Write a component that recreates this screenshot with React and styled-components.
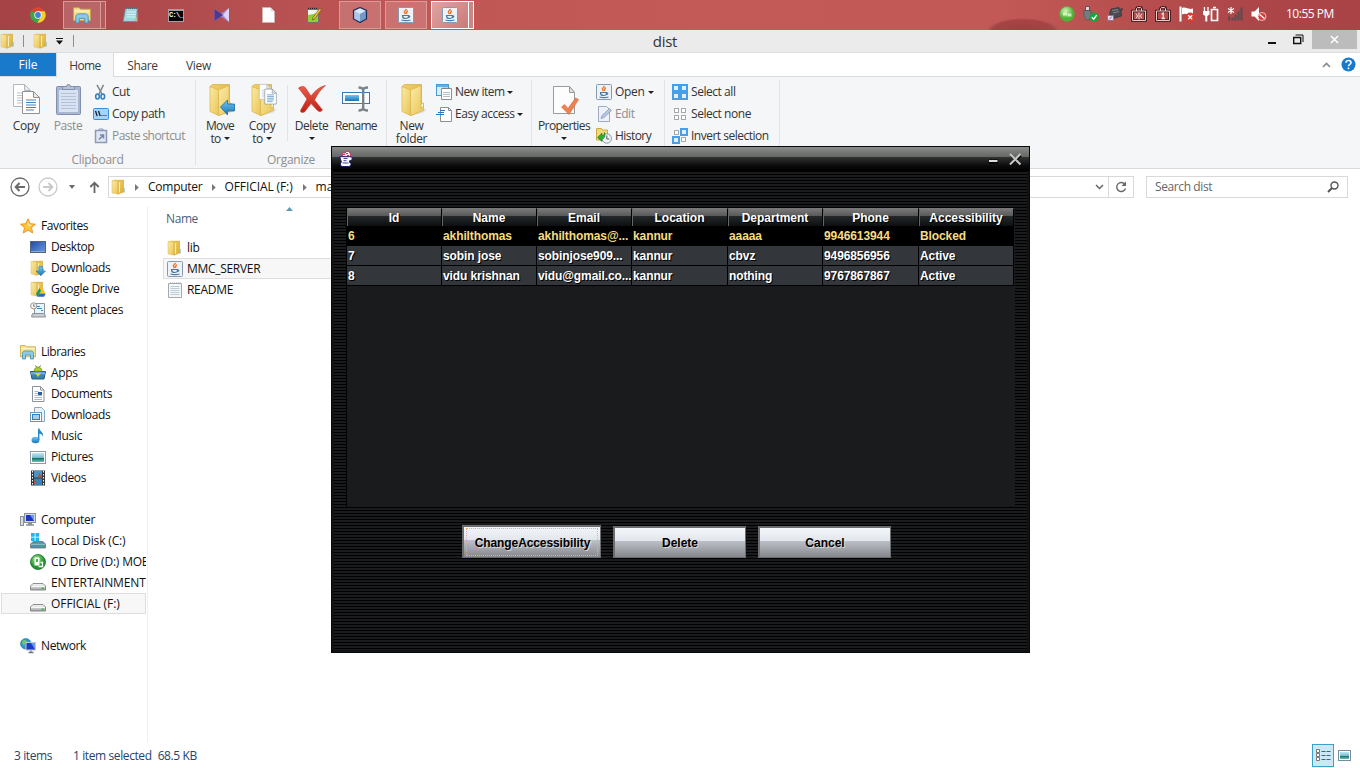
import React from "react";
import styled, { createGlobalStyle, css } from "styled-components";

const Global = createGlobalStyle`
  *, *::before, *::after { box-sizing: border-box; }
  html, body { margin: 0; padding: 0; }
  body { width: 1360px; height: 768px; overflow: hidden; background: #fff; }
  svg { display: block; flex: none; }
`;

const ui = css`
  font-family: "Open Sans", "Noto Sans", sans-serif;
  font-size: 12px;
  line-height: 16px;
  letter-spacing: -0.3px;
  white-space: nowrap;
`;

const Screen = styled.div`
  ${ui}
  position: relative;
  width: 1360px;
  height: 768px;
  overflow: hidden;
  display: flex;
  flex-direction: column;
  color: #111;
  background: #fff;
`;

const Text = styled.span`
  letter-spacing: ${(p) => p.$ls ?? -0.3}px;
`;

/* ---------- taskbar ---------- */
const Taskbar = styled.header`
  height: 30px;
  flex: none;
  display: flex;
  justify-content: space-between;
  background:
    radial-gradient(ellipse 36px 13px at 1023px 31px, #9f3f40 0, #a74345 85%, transparent 100%),
    linear-gradient(90deg, #a44245 0, #b24d4f 200px, #c15755 420px, #c45a57 700px, #c25956 1000px, #ad4649 1250px, #a94346 1360px);
`;
const TaskItems = styled.nav`
  display: flex;
  padding-left: 15px;
`;
const TaskSlot = styled.div`
  width: 46px;
  height: 30px;
  padding: 1px 1px 1px 2px;
`;
const TaskButton = styled.div`
  width: ${(p) => (p.$stack ? 38 : 42)}px;
  height: 28px;
  display: flex;
  align-items: center;
  justify-content: center;
  position: relative;
  ${(p) =>
    p.$open &&
    css`
      border: 1px solid ${p.$active ? "#ffffff" : "#dd9a9a"};
      background: ${p.$active ? "linear-gradient(135deg,#dda5a4,#cb7977)" : "rgba(255,255,255,0.17)"};
    `}
  ${(p) =>
    p.$stack &&
    css`
      &::after {
        content: "";
        position: absolute;
        left: 37px;
        top: -1px;
        width: 5px;
        height: 28px;
        border: 1px solid ${p.$active ? "#ffffff" : "#dd9a9a"};
        border-left: 0;
        background: ${p.$active ? "#cf8583" : "rgba(255,255,255,0.1)"};
      }
    `}
`;
const Tray = styled.div`
  display: flex;
  align-items: center;
  width: 305px;
  padding-bottom: 2px;
`;
const TraySlot = styled.div`
  width: 24px;
  display: flex;
  justify-content: center;
`;
const Clock = styled.time`
  color: #fff;
  margin-left: 15px;
  letter-spacing: -0.5px;
`;

/* ---------- explorer chrome ---------- */
const TitleBar = styled.div`
  height: 23px;
  flex: none;
  display: flex;
  align-items: center;
  background: #ebebeb;
  border-bottom: 1px solid #dcddde;
`;
const QuickBar = styled.div`
  display: flex;
  align-items: center;
  width: 130px;
`;
const Pipe = styled.i`
  width: 1px;
  height: 12px;
  background: #8d8d8d;
  margin: 0 ${(p) => p.$r || 0}px 0 ${(p) => p.$l || 0}px;
`;
const WindowTitle = styled.h1`
  flex: 1;
  margin: 0;
  text-align: center;
  font-weight: 400;
  font-size: 15px;
  line-height: 20px;
  letter-spacing: -0.3px;
  color: #333;
`;
const Caption = styled.div`
  display: flex;
  align-items: flex-start;
  width: 100px;
  height: 22px;
  margin-left: 60px;
`;
const CaptionButton = styled.span`
  width: ${(p) => p.$w}px;
  height: 19px;
  display: flex;
  align-items: center;
  justify-content: center;
  background: ${(p) => (p.$fill ? "#bcbcbc" : "transparent")};
`;

const Tabs = styled.div`
  height: 24px;
  flex: none;
  display: flex;
  border-bottom: 1px solid #dadbdc;
`;
const Tab = styled.div`
  width: ${(p) => p.$w}px;
  height: ${(p) => (p.$on ? 24 : 23)}px;
  padding-top: 5px;
  text-align: center;
  color: #3c3c3c;
  letter-spacing: ${(p) => p.$ls || 0}px;
  ${(p) => p.$file && css`background: #1979ca; color: #fff; padding-top: 4px;`}
  ${(p) =>
    p.$on &&
    css`
      background: #f5f6f7;
      border-right: 1px solid #dadbdc;
      border-left: 1px solid #dadbdc;
    `}
`;
const TabTools = styled.div`
  margin-left: auto;
  display: flex;
  align-items: center;
  gap: 10px;
  padding-right: 4px;
`;

const Ribbon = styled.section`
  height: 92px;
  flex: none;
  display: flex;
  background: #f5f6f7;
  border-bottom: 1px solid #dadbdc;
`;
const Group = styled.div`
  width: ${(p) => p.$w}px;
  height: 85px;
  margin-top: 3px;
  border-right: 1px solid #e2e3e4;
  display: flex;
  flex-direction: column;
  justify-content: space-between;
`;
const GroupBody = styled.div`
  display: flex;
  padding-left: ${(p) => p.$pl || 0}px;
`;
const GroupName = styled.div`
  text-align: center;
  color: #8e8e8e;
  height: 10px;
  line-height: 10px;
  letter-spacing: -0.25px;
`;
const BigButton = styled.div`
  width: ${(p) => p.$w}px;
  display: flex;
  flex-direction: column;
  align-items: center;
  color: ${(p) => (p.$off ? "#8d8d8d" : "#333")};
  line-height: 13px;
  padding-top: 3px;
  letter-spacing: ${(p) => p.$ls ?? -0.1}px;
  svg.big { margin-bottom: 3px; }
`;
const Line = styled.span`
  display: flex;
  align-items: center;
  gap: 3px;
  height: 13px;
`;
const Divider = styled.i`
  width: 1px;
  height: 56px;
  margin: 5px 0 0 4px;
  background: #e2e3e4;
`;
const SmallColumn = styled.div`
  display: flex;
  flex-direction: column;
  padding: 1px 0 0 ${(p) => p.$pl || 0}px;
`;
const SmallButton = styled.div`
  height: 22px;
  display: flex;
  align-items: center;
  gap: 3px;
  color: ${(p) => (p.$off ? "#8d8d8d" : "#333")};
  letter-spacing: ${(p) => p.$ls ?? -0.45}px;
`;
const Caret = styled.i`
  width: 0;
  height: 0;
  margin-left: ${(p) => p.$ml || 0}px;
  border: 3px solid transparent;
  border-top: ${(p) => (p.$c ? 4 : 3)}px solid ${(p) => p.$c || "#222"};
  border-bottom: 0;
`;

const AddressRow = styled.div`
  height: 37px;
  flex: none;
  display: flex;
  align-items: center;
  padding: 0 12px 1px 10px;
`;
const AddressBox = styled.div`
  width: 1026px;
  height: 22px;
  margin-left: 8px;
  border: 1px solid #d9d9d9;
  display: flex;
  align-items: center;
  padding-left: 2px;
`;
const Crumb = styled.span`
  margin-left: ${(p) => p.$l}px;
  letter-spacing: ${(p) => p.$ls ?? 0}px;
`;
const AddressTools = styled.div`
  margin-left: auto;
  height: 20px;
  display: flex;
  align-items: center;
`;
const RefreshBox = styled.div`
  width: 25px;
  height: 20px;
  margin-left: 4px;
  border-left: 1px solid #d9d9d9;
  display: flex;
  align-items: center;
  justify-content: center;
`;
const SearchBox = styled.div`
  width: 202px;
  height: 22px;
  margin-left: 12px;
  border: 1px solid #d9d9d9;
  display: flex;
  align-items: center;
  justify-content: space-between;
  padding: 0 8px;
  color: #666;
`;

const Main = styled.main`
  flex: 1;
  min-height: 0;
  display: flex;
`;
const NavPane = styled.aside`
  width: 148px;
  padding-top: 9px;
  border-right: 1px solid #f0f0f0;
  overflow: hidden;
`;
const NavRow = styled.div`
  width: 146px;
  height: 21px;
  display: flex;
  align-items: center;
  gap: 5px;
  overflow: hidden;
  margin-left: ${(p) => (p.$sel ? 1 : 0)}px;
  ${(p) => p.$sel && css`width: 145px; border: 1px solid #dedede; background: #f7f7f7;`}
  padding-left: ${(p) => (p.$child ? (p.$sel ? 28 : 30) : 20)}px;
`;
const Files = styled.section`
  flex: 1;
  padding-left: 15px;
`;
const FileHeader = styled.div`
  height: 31px;
  padding: 5px 0 0 3px;
  color: #4c607a;
  display: flex;
  gap: 88px;
  align-items: flex-start;
  svg { margin-top: -8px; }
`;
const FileRow = styled.div`
  width: 400px;
  height: 21px;
  display: flex;
  align-items: center;
  gap: 4px;
  padding-left: 3px;
  border: 1px solid ${(p) => (p.$sel ? "#dedede" : "transparent")};
  background: ${(p) => (p.$sel ? "#f7f7f7" : "transparent")};
`;
const Status = styled.footer`
  height: 26px;
  flex: none;
  display: flex;
  align-items: center;
  padding: 1px 8px 0 14px;
  color: #26436f;
`;
const StatusPart = styled.span`
  margin-right: ${(p) => p.$r || 0}px;
  letter-spacing: -0.4px;
`;
const ViewButtons = styled.div`
  margin-left: auto;
  display: flex;
  align-items: center;
  gap: 3px;
`;
const ViewOn = styled.div`
  width: 22px;
  height: 23px;
  border: 1px solid #3ba0cc;
  background: #cbe8f6;
  display: flex;
  align-items: center;
  justify-content: center;
`;

/* ---------- Swing dialog ---------- */
const Dialog = styled.div`
  position: absolute;
  left: 331px;
  top: 146px;
  width: 699px;
  height: 507px;
  display: flex;
  flex-direction: column;
  border: 1px solid #08090a;
  background: #111214;
  font-family: "Liberation Sans", Arial, sans-serif;
  font-size: 12px;
  font-weight: 700;
  letter-spacing: 0;
  color: #fff;
`;
const DialogTitle = styled.div`
  height: 24px;
  flex: none;
  display: flex;
  align-items: center;
  justify-content: space-between;
  padding: 0 7px 0 7px;
  background: linear-gradient(#8a8c8a 0, #656765 10px, #323432 10px, #090a09 19px, #000 24px);
`;
const DialogControls = styled.div`
  display: flex;
  align-items: center;
  gap: 11px;
`;
const DialogBody = styled.div`
  flex: 1;
  margin: 0 2px 2px;
  padding: 37px 12px 0;
  background: repeating-linear-gradient(#000 0 1px, #1a1b1d 1px 3px);
`;
const TablePane = styled.div`
  height: 299px;
  width: 669px;
  background: #1a1b1d;
  border-left: 1px solid #000;
`;
const Grid = styled.div`
  display: grid;
  grid-template-columns: 95px 95px 95px 96px 95px 96px 95px;
  width: 667px;
`;
const HeadCell = styled.div`
  height: 18px;
  line-height: 18px;
  padding-right: 1px;
  text-align: center;
  text-shadow: 1px 1px 0 #000;
  border-right: 1px solid #000;
  border-left: 1px solid #666;
  border-top: 1px solid #777;
  background: linear-gradient(#777877 0, #575958 7px, #26292b 7px, #0d0f10 17px);
`;
const Cell = styled.div`
  height: 20px;
  line-height: 20px;
  padding-left: 1px;
  overflow: hidden;
  letter-spacing: -0.1px;
  text-shadow: 1px 1px 0 #000;
  color: ${(p) => (p.$sel ? "#f7dc82" : "#fff")};
  background: ${(p) => (p.$sel ? "#000" : "#33363b")};
  border-right: 1px solid #000;
  border-bottom: 1px solid #000;
`;
const Actions = styled.div`
  display: flex;
  align-items: flex-end;
  gap: 12px;
  padding: 18px 0 0 116px;
`;
const MetalButton = styled.button`
  position: relative;
  width: ${(p) => p.$w}px;
  height: ${(p) => (p.$focus ? 33 : 32)}px;
  padding: 0;
  border: 2px solid #6b6d70;
  border-right-width: 1px;
  border-bottom-width: 1px;
  background: linear-gradient(#f3f6fa 0, #e2e6ec 44%, #bcc0c8 45%, #85878b 100%);
  color: #000;
  font: 700 12px/14px "Liberation Sans", Arial, sans-serif;
  text-shadow: 1px 1px 0 rgba(255, 255, 255, 0.6);
  ${(p) =>
    p.$focus &&
    css`
      letter-spacing: -0.1px;
      padding: 1px 0 0 1px;
      &::after {
        content: "";
        position: absolute;
        inset: 1px 2px 1px 2px;
        border: 1px dotted #eebb30;
      }
    `}
`;

/* ---------- icons ---------- */
const S = ({ w = 16, h = w, vb, children, ...r }) => (
  <svg width={w} height={h} viewBox={vb || `0 0 ${w} ${h}`} fill="none" {...r}>{children}</svg>
);
const Defs = styled.svg`
  position: absolute;
`;
const Gradients = () => (
  <Defs width="0" height="0">
    <defs>
      <linearGradient id="fold" x1="0" y1="0" x2="1" y2="1"><stop offset="0" stopColor="#fbeba6" /><stop offset="1" stopColor="#e8c456" /></linearGradient>
      <linearGradient id="front" x1="0" y1="0" x2="1" y2="1"><stop offset="0" stopColor="#f0d268" /><stop offset="1" stopColor="#dcab34" /></linearGradient>
      <linearGradient id="blue" x1="0" y1="0" x2="0" y2="1"><stop offset="0" stopColor="#74c6f2" /><stop offset="1" stopColor="#1675b8" /></linearGradient>
      <linearGradient id="screen" x1="0" y1="0" x2="1" y2="1"><stop offset="0" stopColor="#1f4aa8" /><stop offset="1" stopColor="#6c9be2" /></linearGradient>
      <linearGradient id="red" x1="0" y1="0" x2="0" y2="1"><stop offset="0" stopColor="#e9604d" /><stop offset="1" stopColor="#c01f14" /></linearGradient>
      <linearGradient id="drive" x1="0" y1="0" x2="0" y2="1"><stop offset="0" stopColor="#fafafa" /><stop offset="1" stopColor="#a4a6a7" /></linearGradient>
      <radialGradient id="green" cx=".4" cy=".3"><stop offset="0" stopColor="#a8e68c" /><stop offset="1" stopColor="#239330" /></radialGradient>
      <radialGradient id="ball" cx=".4" cy=".3"><stop offset="0" stopColor="#d0f5b4" /><stop offset="1" stopColor="#4fb338" /></radialGradient>
      <linearGradient id="pic" x1="0" y1="0" x2="0" y2="1"><stop offset="0" stopColor="#c2e8f7" /><stop offset=".5" stopColor="#78bccf" /><stop offset=".6" stopColor="#236e5e" /><stop offset="1" stopColor="#62c6c4" /></linearGradient>
    </defs>
  </Defs>
);
const FolderShape = () => (
  <>
    <path d="M1 2 3.500.800H12.500v12L7 15z" fill="#e6c65c" />
    <path d="M1 1.500 7 2v13.200L1 13.800z" fill="url(#fold)" stroke="#dcbb58" strokeWidth=".5" />
    <path d="M7 2.500 12.500 1.200v11.800L7 15.200z" fill="url(#front)" stroke="#cfa741" strokeWidth=".5" />
    <path d="M8.500 3v10.500" stroke="#fbeeb4" />
    <path d="M12.500 9h1.200v4.500l-1.200.3z" fill="#8fc0b4" />
  </>
);
const Folder = ({ s = 16 }) => <S w={s} vb="0 0 16 16"><FolderShape /></S>;
const BigFolderPath = () => (
  <g transform="translate(2.500 0)">
    <path d="M22 24l5 3-4 3-10 2z" fill="#c9ccce" opacity=".5" />
    <path d="M2.500 3.500 5 1.500h17v26l-10 5z" fill="url(#front)" stroke="#d4ad45" strokeWidth=".7" />
    <path d="M2.500 3.500 11 7v25.500l-8.500-4z" fill="url(#fold)" stroke="#d8b34c" strokeWidth=".7" />
    <path d="M11 7 21.500 2.500v17l2.500 1v7L11 32.500z" fill="url(#fold)" stroke="#d8b34c" strokeWidth=".7" />
    <path d="M21.500 20l2.500.6v3.400l-2.500 1z" fill="#fff6cf" stroke="#c7a03b" strokeWidth=".6" />
  </g>
);
const Sheet = ({ x = 0, y = 0, faded }) => (
  <g transform={`translate(${x} ${y})`}>
    <path d="M.5.500h11l6 6v16H.5z" fill="#fff" stroke={faded ? "#b4b8bc" : "#8d9499"} />
    <path d="M11.500.500v6h6z" fill="#e8eaec" stroke={faded ? "#b4b8bc" : "#8d9499"} />
    <path d="M4 9h10M4 11.500h10M4 14h10M4 16.500h10M4 19h8" stroke={faded ? "#b5c5d8" : "#3d86c4"} />
  </g>
);
const Big = (p) => <S className="big" w={30} h={33} {...p} />;
const CopyBig = () => <Big><Sheet x={2} y={1} faded /><Sheet x={11} y={8} /></Big>;
const PasteBig = () => (
  <Big>
    <rect x="3.500" y="3.500" width="24" height="28" rx="1" fill="#a9b6d0" stroke="#8190b1" />
    <rect x="6" y="7" width="19" height="22" fill="#d9e2f1" />
    <path d="M9.500 6.500V3.500h4a2 2 0 0 1 4 0h4v3z" fill="#b7c2d6" stroke="#8190b1" />
    <path d="M8 10.500h15M8 13.500h15M8 16.500h15M8 19.500h15M8 22.500h15M8 25.500h15" stroke="#b5c2dc" />
  </Big>
);
const MoveBig = () => (
  <Big>
    <BigFolderPath />
    <path d="M15.500 24 22.500 17v4h7v7h-7v4z" fill="url(#blue)" stroke="#1b6ba5" strokeWidth=".8" />
  </Big>
);
const CopyToBig = () => (
  <Big>
    <BigFolderPath />
    <g transform="translate(12 1) scale(.68)"><Sheet faded /><Sheet x={8} y={7} /></g>
  </Big>
);
const DeleteBig = () => (
  <Big>
    <path d="M1.500 5c3-2 6-2 7.500.5L14 13c4-5 8-9 14.500-10.500C23 7 20 12 17.500 17l8 10c-2 2-3 2-5 .5L14 20.500c-3 4-5 6.500-6.500 8.500-2.500 1-4 .5-4-1.500L10 16z" fill="url(#red)" stroke="#c4392d" strokeWidth=".6" />
  </Big>
);
const RenameBig = () => (
  <Big>
    <rect x="1.500" y="9.500" width="27" height="11" fill="#fff" stroke="#3a78b5" />
    <rect x="4" y="12" width="14" height="6" fill="url(#blue)" />
    <path d="M17.500 4.500c3 0 4 .7 4.500 2 .5-1.300 1.500-2 5-2M17.500 27.500c3 0 4-.7 4.500-2 .5 1.300 1.500 2 5 2M22.200 6v20" stroke="#7b838a" strokeWidth="2.400" />
  </Big>
);
const NewFolderBig = () => <Big><BigFolderPath /></Big>;
const PropsBig = () => (
  <Big>
    <path d="M4.500 3.500h16l5 6v21h-21z" fill="#fdfdfd" stroke="#9a9a9a" />
    <path d="M20.500 3.500v6h5z" fill="#e4e4e4" stroke="#9a9a9a" />
    <path d="M12.500 24l3-2.500 3.500 4L26.500 15l3 1.500-9.500 15z" fill="#ee8150" stroke="#d8622f" strokeWidth=".6" />
  </Big>
);
const CutIcon = () => (
  <S>
    <path d="M4 .8 9.500 11M10.500 .8 5.500 11" stroke="#7d8790" strokeWidth="1.500" />
    <ellipse cx="4.500" cy="12.500" rx="1.800" ry="2.500" stroke="#2d83c6" strokeWidth="1.600" />
    <ellipse cx="9.800" cy="12.500" rx="1.800" ry="2.500" stroke="#2d83c6" strokeWidth="1.600" />
  </S>
);
const PathIcon = () => (
  <S>
    <rect x=".5" y="2.500" width="15" height="11" rx="1" fill="#a5d3fb" stroke="#3b8ede" />
    <path d="M2.500 5 4.200 10M5.500 5 7.200 10" stroke="#10253a" strokeWidth="1.300" /><path d="M8.500 9.500h1M10.500 9.500h1M12.500 9.500h1" stroke="#10253a" />
  </S>
);
const ShortcutIcon = () => (
  <S>
    <rect x="2.500" y="2.500" width="11" height="12" fill="#dfe6f2" stroke="#8b9abb" strokeWidth="1.500" />
    <path d="M6 2.500V1h4v1.500" stroke="#8b9abb" /><path d="M6 11.500 10 7.500M7 7h3.500v3.500" stroke="#7485ab" strokeWidth="1.500" />
  </S>
);
const NewItemIcon = () => (
  <S>
    <rect x=".5" y=".5" width="12" height="11" fill="#d8eefb" stroke="#489cd4" /><path d="M1 2h11" stroke="#5fb0e4" strokeWidth="2" />
    <path d="M5.500 4.500h10v11h-10z" fill="#fff" stroke="#8a8f95" /><path d="M7 5v-1.500M9 5v-1.500M11 5v-1.500M13 5v-1.500" stroke="#777" /><path d="M7 8.500h7M7 10.500h7M7 12.500h7" stroke="#aebdcc" />
  </S>
);
const EasyIcon = () => (
  <S>
    <path d="M4.500 1.500h8l3 3v11h-11z" fill="#fff" stroke="#8a8f95" /><path d="M12.500 1.500v3h3" stroke="#8a8f95" />
    <path d="M4 4.500h5M0 8.500h8M2 6.500h6" stroke="#2878c3" />
  </S>
);
const JavaCup = ({ s = 16 }) => (
  <S w={s} vb="0 0 16 16">
    <rect x=".5" y=".5" width="15" height="15" rx="1" fill="#eef2f6" stroke="#8599af" />
    <path d="M8.500 2c-.5 1.500-3 2-2 3.500l1 1.500M9.800 3.600C8 5 9 5.500 8.500 7" stroke="#e8762c" strokeWidth="1.400" />
    <path d="M4.500 8.500h6c0 2.500-.5 3-3 3s-3-1-3-3zM10.500 9c2-.3 1.500 1.500-.4 1.700M3.500 13c2.500.8 6.500.8 9 0" stroke="#4f789e" strokeWidth="1.200" />
  </S>
);
const EditIcon = () => (
  <S><path d="M2.500.500h8l3 3v12h-11z" fill="#eef2f8" stroke="#9fabc2" /><path d="M5 12.500l1-3 7.500-7 2 2-7.500 7z" fill="#b9c7df" stroke="#8799bd" strokeWidth=".8" /></S>
);
const HistoryIcon = () => (
  <S>
    <path d="M.5.500h5l1 1.500h5v10H.500z" fill="#f2d978" stroke="#cfaa42" />
    <circle cx="10.800" cy="10.500" r="4.700" fill="#edf3f8" stroke="#8b99a5" /><path d="M10.800 7.500v3.500h2.500" stroke="#4f6070" />
    <path d="M1.500 9.500l4.500-4.500v2.500c2 0 2.500-1 2.500-3 1 3.500 0 6-2.500 6.500V13.500z" fill="#2fae2f" stroke="#19781c" strokeWidth=".6" />
  </S>
);
const SelectIcon = ({ on }) => (
  <S>
    {[[0, 0], [1, 0], [0, 1], [1, 1]].map(([x, y]) => {
      const lit = on === "all" || (on === "invert" && x !== y);
      return lit
        ? <rect key={`${x}${y}`} x={x * 8 + 1} y={y * 8 + 1} width="6" height="6" fill="#dff0fd" stroke="#479ee9" strokeWidth="2" />
        : <rect key={`${x}${y}`} x={x * 7 + 2.5} y={y * 7 + 2.5} width="4" height="4" fill="#fff" stroke="#a7a7a7" />;
    })}
  </S>
);
const Star = () => <S><path d="M8 .8l2.200 4.900 5.300.5-4 3.500 1.200 5.300L8 12.200 3.300 15l1.200-5.300-4-3.500 5.300-.5z" fill="#fdc33b" stroke="#ea8c22" strokeWidth=".9" /><path d="M8 3.500l1.300 3 3 .5L8 8.500z" fill="#ffe99a" /></S>;
const Desktop = () => <S><rect x=".5" y="2.500" width="15" height="11" fill="url(#screen)" stroke="#53657e" /><path d="M1 12.500h14" stroke="#8ba9ce" /></S>;
const DownFolder = () => <S><FolderShape /><path d="M8.800 6.500h4V11h2.700l-4.700 4.800L6.100 11h2.700z" fill="url(#blue)" stroke="#1c6fa9" strokeWidth=".5" /></S>;
const DriveFolder = () => <S><FolderShape /><path d="M9.500 7h3l3 6h-3z" fill="#f5c518" /><path d="M9.500 7 6 13l1.500 2.500L11 9.500z" fill="#159b56" /><path d="M9 12.800h6.700L14 15.800H7.500z" fill="#2367d0" /></S>;
const Recent = () => <S><path d="M4.500 1.500h10v10h-10z" fill="#eaf4fb" stroke="#8296a8" /><path d="M7 4.500h3M7 6.500h5M11 8.500h2" stroke="#3c88c2" /><circle cx="3.700" cy="3.900" r="3.100" fill="#f4f6f8" stroke="#8c96a0" /><path d="M3.700 2.200v2h1.500" stroke="#555" strokeWidth=".8" /><path d="M2.500 11.500h12l1 3.500h-14z" fill="#c8cdd2" stroke="#8b9299" /></S>;
const Library = ({ s = 16 }) => <S w={s} vb="0 0 16 16"><path d="M.500 1.500h5l1.200 1.300H15.500v10H.500z" fill="#f5e193" stroke="#c9a544" strokeWidth=".8" /><path d="M1 4.500h14" stroke="#fff6c9" /><path d="M2.500 15V9.500C2.500 8 3.500 7 5 7h6c1.500 0 2.500 1 2.500 2.500V15h-3v-4H5.500v4z" fill="#8acbea" stroke="#3f8fb8" strokeWidth=".8" /></S>;
const Apps = () => <S><path d="M.5 6.500h15l-1.500 7.500H2z" fill="#3b82ae" stroke="#23597e" /><path d="M1 7h14v2.500H1z" fill="#69abcf" /><path d="M4 6.500a4 4.500 0 0 1 8 0z" fill="#a9c72f" stroke="#577a10" strokeWidth=".6" /><path d="M5 8h6l-3 4z" fill="#c3d93a" /><path d="M5.500.5l1 1.500M10.500.5l-1 1.500" stroke="#577a10" /></S>;
const Doc = () => <S><path d="M2.500.500h8l3.500 3.500v11.500H2.500z" fill="#fff" stroke="#8b929a" /><path d="M10.500.500V4H14" stroke="#8b929a" /><path d="M4.500 5.500h4M4.500 7.500h4M4.500 9.500h7.500M4.500 11.500h7.500M4.500 13.500h7.500" stroke="#a9b8cc" /><rect x="8" y="6" width="4" height="3" fill="#285b9e" /></S>;
const LibDown = () => <S><path d="M4.500.500h7l3 3v11h-10z" fill="#e9f2f9" stroke="#8fa5b9" /><rect x=".5" y="5.500" width="11" height="9" fill="#fff" stroke="#7194b4" /><rect x="2.500" y="7.500" width="7" height="5" fill="#9fd0f2" stroke="#2d80bd" /></S>;
const Music = () => <S><ellipse cx="5.500" cy="12" rx="4" ry="3.300" fill="url(#blue)" /><path d="M8 .5h1.400c.5 3 4.600 3.500 3.600 8.500-.5-2.500-2-3-3.600-3.300V12H8z" fill="#2a8acb" /></S>;
const Picture = () => <S><rect x=".5" y="2.500" width="15" height="12" fill="#fff" stroke="#8e9ba6" /><rect x="2" y="4" width="12" height="9" fill="url(#pic)" /></S>;
const Video = () => <S><rect x="1" y=".5" width="14" height="15" fill="#30363c" /><rect x="4" y="1" width="8" height="6.500" fill="#4a94c8" /><rect x="4" y="8.500" width="8" height="6.500" fill="#3a83ba" /><path d="M9 3l3 3v1.500H8zM4 10l2.500 2-1.500 2H4z" fill="#b5533a" /><path d="M2.500 1v14M13.500 1v14" stroke="#fff" strokeDasharray="1.500 1.500" /></S>;
const Computer = () => <S><rect x=".5" y="4.500" width="3" height="9" fill="#d8dcdf" stroke="#8a9198" /><rect x="4.500" y="1.500" width="11" height="9" fill="#d5dade" stroke="#8a9198" /><rect x="6" y="3" width="8" height="6" fill="#1b35c4" /><path d="M10 3h4v6z" fill="#6c97f0" /><path d="M8 11.500h4M6 13h8" stroke="#8a9198" strokeWidth="1.500" /></S>;
const Drive = ({ os }) => <S>{os && <path d="M1 0h3.700v3.700H1zM5.500 0H9.200v3.700H5.500zM1 4.500h3.700V8H1zM5.500 4.500H9.200V8H5.500z" fill="#25b4ea" />}<path d="M3 8.500h10l2.500 2.500v4H.500v-4z" fill={os ? "#4e91a8" : "url(#drive)"} stroke="#6f7477" strokeWidth=".8" /><path d="M1 11.300h14" stroke={os ? "#98c7d5" : "#fff"} /><rect x="11.500" y="12.500" width="2.500" height="1.500" fill="#43bd3a" /></S>;
const CD = () => <S><circle cx="8" cy="8" r="7.500" fill="url(#green)" stroke="#176f2a" strokeWidth=".8" /><rect x="4.500" y="3.500" width="5" height="8" rx=".5" fill="#fff" /><path d="M6 5h2v3H6z" fill="#4aae47" /><path d="M8.500 12.500h4v-4h-2" stroke="#fff" strokeWidth="1.300" /></S>;
const Network = () => <S><circle cx="5.800" cy="5.800" r="5.300" fill="#3396c8" stroke="#2270a2" strokeWidth=".6" /><path d="M2 3.500C4 1 6 2 7 3.500S4 5 4.500 7 2 7 2 3.500z" fill="#72c758" /><rect x="6" y="4.500" width="9.500" height="7.500" fill="#1b3acb" stroke="#c3cad0" /><path d="M11 5h4v6.500z" fill="#6c97f0" /><path d="M8.500 14.500h5M11 12.500v2" stroke="#6d7880" strokeWidth="1.300" /></S>;
const TextFile = () => <S><path d="M1.500 1.500h13v14h-13z" fill="#f4f7f8" stroke="#a6a9ac" /><path d="M3.500 2V.500M5.500 2V.500M7.500 2V.500M9.500 2V.500M11.500 2V.500M13 2V.500" stroke="#a0a4a6" /><path d="M3.500 4.500h9M3.500 6.500h9M3.500 8.500h9M3.500 10.500h9M3.500 12.500h9" stroke="#bccbd6" /></S>;

const Chrome = () => (
  <S w={16} vb="0 0 16 16">
    <path d="M8 8 1.600 3.600A7.700 7.700 0 0 1 14.700 4.300H8z" fill="#e2412f" />
    <path d="M8 8l-6.400-4.400A7.700 7.700 0 0 0 7.200 15.700L11 9.800z" fill="#3da546" />
    <path d="M8 4.300h6.700A7.700 7.700 0 0 1 7.200 15.700L11.200 9.800z" fill="#f9cf2e" />
    <circle cx="8" cy="8" r="3.700" fill="#fff" /><circle cx="8" cy="8" r="2.900" fill="#3d82d4" />
  </S>
);
const NotepadTask = () => <S><path d="M3.500 1.500h12l-1.500 13H1z" fill="#a9d4de" stroke="#5d8c9a" strokeWidth=".8" /><path d="M5 5h9M4.700 7.500h9M4.400 10h9" stroke="#d9f0f5" /><path d="M4.500 2V.5M6.500 2V.5M8.500 2V.5M10.500 2V.5M12.500 2V.5M14.500 2V.5" stroke="#4e666e" strokeWidth=".9" /><path d="M13.500 14.500 15.500 4v10.500z" fill="#c6b593" /></S>;
const CmdText = styled.span`
  width: 16px;
  height: 13px;
  background: #050505;
  border: 1px solid #a1a1a1;
  border-top-width: 2px;
  color: #fff;
  font: 700 7px/9px "Liberation Mono", monospace;
  letter-spacing: -0.7px;
`;
const VS = () => <S><path d="M.5 2 7 6.500 15 1v14L7 9.500.500 14z" fill="#a28cd0" /><path d="M.5 2 9 8l-8.500 6z" fill="#4b3796" /><path d="M15 1v14L9 8z" fill="#dfd3f1" /></S>;
const BlankPage = () => <S><path d="M2.500.500h8l4 4v11h-12z" fill="#fcfcfc" stroke="#c9b9b9" strokeWidth=".6" /><path d="M10.500.500v4h4z" fill="#ddd" /></S>;
const Npp = () => <S><path d="M1.500 2.500h11v13h-11z" fill="#f5f7f2" stroke="#65605c" strokeWidth=".8" /><path d="M2 8l10-2v9H2z" fill="#8dcf3c" /><path d="M2.500 2V.8M4.500 2V.8M6.500 2V.8M8.500 2V.8M10.500 2V.8" stroke="#222" /><path d="M7 10.500 13.500 1.500l2 1L9 11.500 6.500 13z" fill="#f0c53e" stroke="#5c4518" strokeWidth=".6" /></S>;
const Cube = () => <S><path d="M8 .5l6.500 3v8.500L8 15.500 1.500 12V3.500z" fill="#abc6e8" /><path d="M8 .5l6.500 3L8 7 1.500 3.500z" fill="#dbe8f6" /><path d="M8 7l6.500-3.500V12L8 15.500z" fill="#7698c6" /><path d="M8 .5l6.500 3v8.500L8 15.500 1.500 12V3.500z" stroke="#1d2c52" strokeWidth="1.200" /></S>;

const Ball = () => <S><circle cx="8" cy="8" r="7.500" fill="url(#ball)" stroke="#58a13f" strokeWidth=".6" /><path d="M4 6.500h4v3H4zM8.500 7.500h4v3h-4z" fill="#e9f9da" opacity=".75" /></S>;
const Badge = ({ color, bad }) => <><circle cx="11.200" cy="11.200" r="4.700" fill={color} />{bad ? <path d="M9.200 9.200l4 4M13.200 9.200l-4 4" stroke="#fff" strokeWidth="1.300" /> : <path d="M8.800 11.200l1.900 2 3-4" stroke="#fff" strokeWidth="1.400" />}</>;
const Usb = () => <S><path d="M2.500.500h4v4h-4z" fill="#dadada" stroke="#555" /><path d="M1 4.500h7v6L6 14H3.500L1 10.500z" fill="#777b80" stroke="#4c4f52" strokeWidth=".6" /><Badge color="#1fa23a" /></S>;
const Plug = () => <S><path d="M4 3 12 1.500l.5 2 3-1-1.500 3.500.5 4-8 2.500L2.500 8z" fill="#484c52" stroke="#2f3236" strokeWidth=".7" /><path d="M5 4.500l6-1M6 7l6-1.500" stroke="#85898d" /><path d="M.5 9.500h6v5h-6z" fill="#e9e1ef" stroke="#8a7593" /><path d="M2 13.500l3-3" stroke="#9250a8" /></S>;
const Bag = ({ n }) => <S><path d="M5.500 5V2.500C5.500 1 10.500 1 10.500 2.500V5M1.500 5h13v9.500h-13z" stroke="#33191b" strokeWidth="2.600" /><path d="M5.500 5V2.500C5.500 1 10.500 1 10.500 2.500V5M1.500 5h13v9.500h-13z" stroke="#efc8c8" />{n === 1 ? <path d="M6.500 8.300 8.200 7v5.500M6.500 12.500h3.500" stroke="#f5dada" strokeWidth="1.300" /> : <path d="M8 6.500v7M5 7.500l1.500 2.500L5 12.500M11 7.500 9.500 10l1.500 2.500" stroke="#f5dada" />}</S>;
const Flag = () => <S><path d="M1.500.500v15" stroke="#fff" strokeWidth="2" /><path d="M3 2c4-1.500 6 2 11 .5v6C9 10 7 6.500 3 8.500z" fill="#fff" /><Badge color="#d93a31" bad /></S>;
const Battery = () => <S><path d="M8.500 3.500h6v11h-6zM10 1.500h3" stroke="#fff" strokeWidth="1.700" /><path d="M1.500 1v4M5 1v4" stroke="#fff" strokeWidth="1.300" /><path d="M0 5h6.500v3.500L4.300 10v5.500h-2V10L0 8.500z" fill="#fff" /></S>;
const Signal = () => <S><path d="M5.500 14.500v-3M8.500 14.500V9M11.500 14.500V5.500M14.500 14.500V1.500" stroke="#5f4b4c" strokeWidth="2.200" /><path d="M4 1v7M1 2.500l6 4M7 2.500l-6 4" stroke="#fff" strokeWidth="1.200" /><path d="M2 10.500v4" stroke="#5f4b4c" strokeWidth="2" /></S>;
const Mute = () => <S><path d="M.5 5.500h3L8 1v14l-4.500-4.500h-3z" fill="#fff" /><circle cx="11" cy="10.500" r="4" fill="#d93a31" stroke="#f6dcdc" strokeWidth=".8" /><path d="M8.500 8.500l5 4" stroke="#fff" strokeWidth="1.500" /></S>;

const Duke = () => (
  <S w={14} h={16}>
    <path d="M3.500 2h3V.5h4V2h1v3.500h-8z" fill="#f7eef0" stroke="#c6303c" strokeWidth=".8" />
    <path d="M4 3.500h2M7 2.500h2M8 4.500h2" stroke="#e0323e" />
    <path d="M.7 5.700h10l2.600.6-.5 3-2.300.5v1.500l1.500 1.200v1.800l-2 1.200H3L1.500 14v-2l1-.8z" fill="#fff" stroke="#12126e" strokeWidth=".9" />
    <path d="M4.500 7.500h4M4.500 9.700h3M3.500 12h6" stroke="#12126e" strokeWidth=".8" />
  </S>
);
const Back = ({ off }) => (
  <S w={20}><g transform={off ? "translate(20 0) scale(-1 1)" : undefined} stroke={off ? "#c9c9c9" : "#6b6b6b"}><circle cx="10" cy="10" r="9" strokeWidth="1.300" /><path d="M15 10H6M9.500 6 5.700 10l3.800 4" strokeWidth="2" /></g></S>
);
const Tri = () => <S w={4} h={7}><path d="M0 0v7l3.700-3.500z" fill="#777" /></S>;
const MenuMark = styled(S)`
  margin-left: 6px;
`;
const UpArrow = styled(S)`
  margin-left: 14px;
`;

const taskItems = [
  { icon: <Chrome /> },
  { icon: <Library s={18} />, open: true, stack: true },
  { icon: <NotepadTask /> },
  { icon: <CmdText>C:\_</CmdText> },
  { icon: <VS /> },
  { icon: <BlankPage /> },
  { icon: <Npp /> },
  { icon: <Cube />, open: true },
  { icon: <JavaCup />, open: true },
  { icon: <JavaCup />, open: true, stack: true, active: true },
];
const tray = [Ball, Usb, Plug, Bag, () => <Bag n={1} />, Flag, Battery, Signal, Mute];

const nav = [
  ["Favorites", <Star />, 0, -0.4], ["Desktop", <Desktop />, 1, -0.45], ["Downloads", <DownFolder />, 1, -0.35], ["Google Drive", <DriveFolder />, 1], ["Recent places", <Recent />, 1, -0.35],
  null,
  ["Libraries", <Library />, 0, -0.5], ["Apps", <Apps />, 1], ["Documents", <Doc />, 1, -0.35], ["Downloads", <LibDown />, 1, -0.35], ["Music", <Music />, 1], ["Pictures", <Picture />, 1, -0.35], ["Videos", <Video />, 1, -0.35],
  null,
  ["Computer", <Computer />, 0], ["Local Disk (C:)", <Drive os />, 1, -0.15], ["CD Drive (D:) MOB", <CD />, 1, -0.2], ["ENTERTAINMENT", <Drive />, 1, -0.1], ["OFFICIAL (F:)", <Drive />, 1, -0.05, true],
  null,
  ["Network", <Network />, 0, -0.4],
];
const heads = ["Id", "Name", "Email", "Location", "Department", "Phone", "Accessibility"];
const users = [
  ["6", "akhilthomas", "akhilthomas@...", "kannur", "aaaaa", "9946613944", "Blocked"],
  ["7", "sobin jose", "sobinjose909...", "kannur", "cbvz", "9496856956", "Active"],
  ["8", "vidu krishnan", "vidu@gmail.co...", "kannur", "nothing", "9767867867", "Active"],
];

function ExplorerRibbon() {
  return (
    <Ribbon>
      <Group $w={196}>
        <GroupBody $pl={5}>
          <BigButton $w={42} $ls={-0.4}><CopyBig />Copy</BigButton>
          <BigButton $w={42} $ls={-0.4} $off><PasteBig />Paste</BigButton>
          <SmallColumn $pl={4}>
            <SmallButton><CutIcon />Cut</SmallButton>
            <SmallButton><PathIcon />Copy path</SmallButton>
            <SmallButton $off $ls={-0.55}><ShortcutIcon />Paste shortcut</SmallButton>
          </SmallColumn>
        </GroupBody>
        <GroupName>Clipboard</GroupName>
      </Group>
      <Group $w={191}>
        <GroupBody $pl={3}>
          <BigButton $w={42} $ls={-0.7}><MoveBig />Move<Line>to<Caret /></Line></BigButton>
          <BigButton $w={42} $ls={-0.4}><CopyToBig />Copy<Line>to<Caret /></Line></BigButton>
          <Divider />
          <BigButton $w={47} $ls={-0.45}><DeleteBig />Delete<Line><Caret /></Line></BigButton>
          <BigButton $w={42} $ls={-0.7}><RenameBig />Rename</BigButton>
        </GroupBody>
        <GroupName>Organize</GroupName>
      </Group>
      <Group $w={145}>
        <GroupBody $pl={3}>
          <BigButton $w={43} $ls={-0.3}><NewFolderBig />New<Line>folder</Line></BigButton>
          <SmallColumn $pl={3}>
            <SmallButton><NewItemIcon />New item<Caret $ml={-1} /></SmallButton>
            <SmallButton><EasyIcon />Easy access<Caret $ml={-1} /></SmallButton>
          </SmallColumn>
        </GroupBody>
        <GroupName>New</GroupName>
      </Group>
      <Group $w={133}>
        <GroupBody $pl={2}>
          <BigButton $w={60} $ls={-0.6}><PropsBig />Properties<Line><Caret /></Line></BigButton>
          <SmallColumn $pl={2}>
            <SmallButton $ls={-0.3}><JavaCup />Open<Caret /></SmallButton>
            <SmallButton $off><EditIcon />Edit</SmallButton>
            <SmallButton $ls={-0.55}><HistoryIcon />History</SmallButton>
          </SmallColumn>
        </GroupBody>
        <GroupName>Open</GroupName>
      </Group>
      <Group $w={115}>
        <GroupBody $pl={7}>
          <SmallColumn>
            <SmallButton><SelectIcon on="all" />Select all</SmallButton>
            <SmallButton><SelectIcon />Select none</SmallButton>
            <SmallButton $ls={-0.5}><SelectIcon on="invert" />Invert selection</SmallButton>
          </SmallColumn>
        </GroupBody>
        <GroupName>Select</GroupName>
      </Group>
    </Ribbon>
  );
}

function UserDialog() {
  return (
    <Dialog>
      <DialogTitle>
        <Duke />
        <DialogControls>
          <S w={9} h={12}><path d="M0 8.500h9" stroke="#000" strokeWidth="4" /><path d="M0 8h8.500" stroke="#ddd" strokeWidth="2" /></S>
          <S w={13}><path d="M2 2.500l10 10M12 2.500l-10 10" stroke="#000" strokeWidth="2" /><path d="M1 1l10.500 10.500M11.500 1 1 11.500" stroke="#c6c6c6" strokeWidth="2" /></S>
        </DialogControls>
      </DialogTitle>
      <DialogBody>
        <TablePane>
          <Grid>
            {heads.map((h) => <HeadCell key={h}>{h}</HeadCell>)}
            {users.map((u, r) => u.map((v, c) => <Cell key={`${r}-${c}`} $sel={r === 0}>{v}</Cell>))}
          </Grid>
        </TablePane>
        <Actions>
          <MetalButton $w={139} $focus>ChangeAccessibility</MetalButton>
          <MetalButton $w={133}>Delete</MetalButton>
          <MetalButton $w={133}>Cancel</MetalButton>
        </Actions>
      </DialogBody>
    </Dialog>
  );
}

export default function App() {
  return (
    <Screen>
      <Global />
      <Gradients />
      <Taskbar>
        <TaskItems>
          {taskItems.map((t, i) => (
            <TaskSlot key={i}>
              <TaskButton $open={t.open} $stack={t.stack} $active={t.active}>{t.icon}</TaskButton>
            </TaskSlot>
          ))}
        </TaskItems>
        <Tray>
          {tray.map((Icon, i) => <TraySlot key={i}><Icon /></TraySlot>)}
          <Clock>10:55 PM</Clock>
        </Tray>
      </Taskbar>

      <TitleBar>
        <QuickBar>
          <Folder /><Pipe $l={7} $r={9} /><Folder />
          <MenuMark w={9} h={8}><path d="M1 1.500h7" stroke="#111" /><path d="M1 3.500h7L4.500 7.500z" fill="#111" /></MenuMark>
          <Pipe $l={9} />
        </QuickBar>
        <WindowTitle>dist</WindowTitle>
        <Caption>
          <CaptionButton $w={25}><S w={9} h={10}><path d="M0 8h8" stroke="#111" strokeWidth="2" /></S></CaptionButton>
          <CaptionButton $w={27}><S w={11} h={11}><path d="M.7 3.500h7v6h-7z" stroke="#111" strokeWidth="1.400" /><path d="M2.500 1h7.500v7" stroke="#111" /></S></CaptionButton>
          <CaptionButton $w={45} $fill><S w={9}><path d="M1 1l7 7M8 1 1 8" stroke="#fff" strokeWidth="1.500" /></S></CaptionButton>
        </Caption>
      </TitleBar>

      <Tabs>
        <Tab $w={56} $file>File</Tab>
        <Tab $w={58} $on $ls={-0.6}>Home</Tab>
        <Tab $w={57} $ls={-0.4}>Share</Tab>
        <Tab $w={55} $ls={-0.3}>View</Tab>
        <TabTools>
          <S w={9} h={6}><path d="M1 5l3.500-3.500L8 5" stroke="#888" strokeWidth="1.600" /></S>
          <S w={15}><circle cx="7.500" cy="7.500" r="7" fill="#1979ca" /><path d="M5 5.700c0-3 5-3 5 0 0 1.800-2.500 1.600-2.500 3.500M7.500 10.500v1.700" stroke="#fff" strokeWidth="1.600" /></S>
        </TabTools>
      </Tabs>

      <ExplorerRibbon />

      <AddressRow>
        <Back />
        <S w={8} h={1} /><Back off />
        <Caret $ml={11} $c="#6b6b6b" />
        <UpArrow w={11} h={12}><path d="M5.500 12V2M1.300 6l4.200-4.300L9.700 6" stroke="#666" strokeWidth="1.800" /></UpArrow>
        <AddressBox>
          <Folder /><S w={8} h={1} /><Tri />
          <Crumb $l={9} $ls={-0.25}>Computer</Crumb><S w={9} h={1} /><Tri />
          <Crumb $l={9} $ls={-0.1}>OFFICIAL (F:)</Crumb><S w={10} h={1} /><Tri />
          <Crumb $l={9}>main</Crumb>
          <AddressTools>
            <S w={9} h={6}><path d="M1 1l3.500 3.500L8 1" stroke="#666" strokeWidth="1.500" /></S>
            <RefreshBox><S w={12}><path d="M10 3.500A4.500 4.500 0 1 0 10.500 7.500" stroke="#666" strokeWidth="1.400" /><path d="M11 .5v4.500H6.500z" fill="#666" /></S></RefreshBox>
          </AddressTools>
        </AddressBox>
        <SearchBox>
          <Text $ls={-0.4}>Search dist</Text>
          <S w={12}><circle cx="7.500" cy="4.500" r="3.500" stroke="#555" strokeWidth="1.400" /><path d="M5 7 1 11" stroke="#555" strokeWidth="2" /></S>
        </SearchBox>
      </AddressRow>

      <Main>
        <NavPane>
          {nav.map((n, i) =>
            n ? <NavRow key={i} $child={n[2]} $sel={n[4]}>{n[1]}<Text $ls={n[3]}>{n[0]}</Text></NavRow> : <NavRow key={i} />
          )}
        </NavPane>
        <Files>
          <FileHeader><Text $ls={-0.4}>Name</Text><S w={7} h={14}><path d="M0 8l3.500-4L7 8z" fill="#5d9ab5" /></S></FileHeader>
          <FileRow><Folder />lib</FileRow>
          <FileRow $sel><JavaCup />MMC_SERVER</FileRow>
          <FileRow><TextFile />README</FileRow>
        </Files>
      </Main>

      <Status>
        <StatusPart $r={21}>3 items</StatusPart>
        <StatusPart $r={6}>1 item selected</StatusPart>
        <StatusPart>68.5 KB</StatusPart>
        <ViewButtons>
          <ViewOn><S w={16} h={13}><path d="M1.500.500h3v3h-3zM1.500 4.500h3v3h-3zM1.500 8.500h3v3h-3z" fill="#fff" stroke="#777" /><path d="M6.500 2.500h4M11.500 2.500h4M6.500 6.500h4M11.500 6.500h4M6.500 10.500h4M11.500 10.500h4" stroke="#46607c" /></S></ViewOn>
          <S w={15}><rect x="1.500" y="2.500" width="12" height="10" fill="#fff" stroke="#7c8b97" /><rect x="3" y="4" width="9" height="7" fill="url(#pic)" /></S>
        </ViewButtons>
      </Status>

      <UserDialog />
    </Screen>
  );
}
